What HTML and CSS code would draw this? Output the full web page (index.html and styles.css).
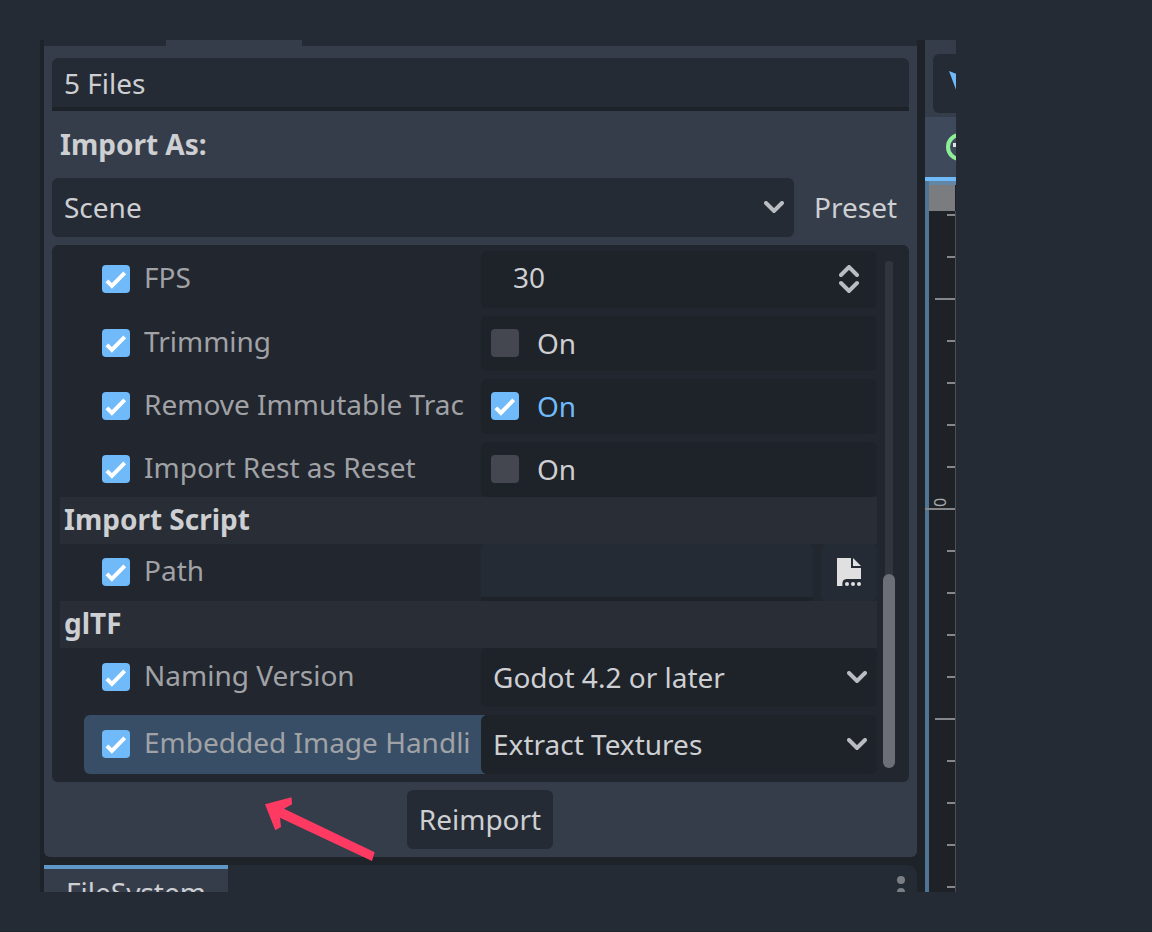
FILE: index.html
```html
<!DOCTYPE html>
<html lang="en">

<head>
    <meta charset="utf-8">
    <title>Import dock</title>
    <link rel="stylesheet" href="styles.css">
</head>

<body>
    <!-- shared icons -->
    <svg class="sprite">
        <symbol id="check" viewBox="0 0 28 28">
            <path d="M4.9 15.8l5 5.1L22.7 7.8" fill="none" stroke="#fff" stroke-width="4" />
        </symbol>
        <symbol id="chevron" viewBox="0 0 20 12">
            <path d="M2 2l8 8 8-8" fill="none" stroke="#b9bcc1" stroke-width="4" stroke-linecap="round" />
        </symbol>
    </svg>

    <div class="editor">
        <div class="dock">
            <div class="top-tabs"><div class="top-tab"></div></div>

            <div class="panel">
                <div class="line-edit files">5 Files</div>
                <div class="heading">Import As:</div>
                <div class="import-as">
                    <div class="select">Scene <svg class="chevron"><use href="#chevron" /></svg></div>
                    <div class="preset">Preset</div>
                </div>

                <div class="options">
                    <div class="rows">
                        <div class="row first">
                            <div class="label"><span class="box on"><svg><use href="#check" /></svg></span><span class="name">FPS</span></div>
                            <div class="value spin">
                                <span class="number">30</span>
                                <svg class="updown" viewBox="0 0 20 28">
                                    <path d="M2 10l8-8 8 8M2 18l8 8 8-8" fill="none" stroke="#b9bcc1" stroke-width="4" stroke-linecap="round" />
                                </svg>
                            </div>
                        </div>
                        <div class="row toggle">
                            <div class="label"><span class="box on"><svg><use href="#check" /></svg></span><span class="name">Trimming</span></div>
                            <div class="value"><span class="box"></span><span class="state">On</span></div>
                        </div>
                        <div class="row toggle">
                            <div class="label"><span class="box on"><svg><use href="#check" /></svg></span><span class="name">Remove Immutable Trac</span></div>
                            <div class="value"><span class="box on"><svg><use href="#check" /></svg></span><span class="state active">On</span></div>
                        </div>
                        <div class="row toggle">
                            <div class="label"><span class="box on"><svg><use href="#check" /></svg></span><span class="name">Import Rest as Reset</span></div>
                            <div class="value"><span class="box"></span><span class="state">On</span></div>
                        </div>

                        <div class="section">Import Script</div>
                        <div class="row path">
                            <div class="label"><span class="box on"><svg><use href="#check" /></svg></span><span class="name">Path</span></div>
                            <div class="path-value">
                                <div class="line-edit"></div>
                                <div class="browse">
                                    <svg width="24" height="28" viewBox="0 0 24 28" fill="#e0e0e0">
                                        <path d="M0 0H14V10H24V21H9.5A4.5 4.5 0 0 0 5.4 25.5V28H0Z" />
                                        <path d="M16 0l8 8h-8z" />
                                        <circle cx="10" cy="26" r="2" />
                                        <circle cx="16" cy="26" r="2" />
                                        <circle cx="22" cy="26" r="2" />
                                    </svg>
                                </div>
                            </div>
                        </div>

                        <div class="section">glTF</div>
                        <div class="row option">
                            <div class="label"><span class="box on"><svg><use href="#check" /></svg></span><span class="name">Naming Version</span></div>
                            <div class="value">Godot 4.2 or later <svg class="chevron"><use href="#chevron" /></svg></div>
                        </div>
                        <div class="row option selected">
                            <div class="label"><span class="box on"><svg><use href="#check" /></svg></span><span class="name">Embedded Image Handli</span></div>
                            <div class="value">Extract Textures <svg class="chevron"><use href="#chevron" /></svg></div>
                        </div>
                    </div>
                    <div class="scrollbar"><div class="thumb"></div></div>
                </div>

                <div class="reimport">Reimport</div>
            </div>

            <div class="bottom-tabs">
                <div class="bottom-tab">FileSystem</div>
                <svg class="dots" width="8" height="20" viewBox="0 0 8 20" fill="#7b7e85">
                    <circle cx="4" cy="4" r="4" />
                    <circle cx="4" cy="16" r="4" />
                </svg>
            </div>
        </div>

        <div class="viewport">
            <div class="toolbar">
                <div class="tool">
                    <svg width="23" height="59" viewBox="0 0 23 59"><path d="M16 17l24 9-10 4-5 11z" fill="#70bafa" /></svg>
                </div>
            </div>
            <div class="scene-tab">
                <svg width="31" height="60" viewBox="0 0 31 60">
                    <circle cx="35" cy="30" r="12" fill="none" stroke="#8eef97" stroke-width="4" />
                    <path d="M28 26h8v4h-8z" fill="#e0e0e0" />
                </svg>
            </div>
            <div class="canvas">
                <!-- vertical ruler -->
                <svg width="31" height="711" viewBox="0 0 31 711">
                    <path d="M4 4h26v26H4z" fill="#7b7c80" />
                    <path d="M30.5 30v681" stroke="#4c4e54" />
                    <path d="M22 34h8M22 76h8M10 118h20M22 160h8M22 202h8M22 244h8M22 286h8M0 328h30M22 370h8M22 412h8M22 454h8M22 496h8M10 538h20M22 580h8M22 622h8M22 664h8M22 706h8" stroke="#85878a" stroke-width="2" />
                    <text class="ruler-text" transform="translate(21 326) rotate(-90)">0</text>
                </svg>
            </div>
        </div>
    </div>

    <svg class="arrow" width="110" height="64" viewBox="265 797 110 64">
        <path d="M265 804.3L291.5 797.2L292 804.3L284 808.7L374.7 852.3L372 861L280 817.7L281 827L275.3 830.3Z" fill="#ff3a62" />
    </svg>
</body>

</html>
```
FILE: styles.css
```css
* {
    box-sizing: border-box;
}

body {
    margin: 0;
    height: 932px;
    padding: 40px;
    background: #252b34;
    border-bottom: 1px solid #20242c;
    color: #cdcfd2;
    font: 28px/38px "Noto Sans", sans-serif;
    white-space: nowrap;
    overflow: hidden;
}

.sprite {
    display: none;
}

.editor {
    display: flex;
    gap: 8px;
    width: 916px;
    height: 852px;
    padding-left: 4px;
    background: #1e2329;
    overflow: hidden;
}

/* left dock */

.dock {
    width: 873px;
    flex: none;
}

.top-tabs {
    height: 6px;
    padding-left: 122px;
    background: #252b34;
}

.top-tab {
    width: 136px;
    height: 6px;
    background: #363d4a;
}

.panel {
    display: flex;
    flex-direction: column;
    height: 811px;
    padding: 12px 8px 8px;
    background: #363d4a;
    border-radius: 0 0 6px 6px;
}

.line-edit {
    background: #252b34;
    border-bottom: 4px solid #1e2329;
    border-radius: 6px 6px 0 0;
}

.files {
    height: 53px;
    padding: 6px 12px;
}

.heading {
    height: 67px;
    padding: 14px 8px;
    font-weight: bold;
}

.import-as {
    display: flex;
    height: 59px;
}

.select {
    display: flex;
    align-items: center;
    justify-content: space-between;
    width: 742px;
    padding: 0 10px 1px 12px;
    background: #252b34;
    border-radius: 6px;
}

.chevron {
    width: 20px;
    height: 12px;
}

.preset {
    padding: 10px 0 0 20px;
}

.options {
    display: flex;
    gap: 6px;
    height: 537px;
    margin-top: 8px;
    padding: 6px 14px 8px 8px;
    background: #22262f;
    border-radius: 6px;
}

.rows {
    width: 817px;
}

.row {
    display: flex;
    height: 55px;
    margin-top: 8px;
    padding-left: 24px;
}

.row.first {
    height: 57px;
    margin-top: 0;
}

.row.path {
    height: 57px;
    margin-top: 0;
}

.row.option {
    height: 59px;
}

.section + .row.option {
    margin-top: 0;
}

.label {
    display: flex;
    align-items: center;
    width: 397px;
    padding: 0 0 1px 18px;
    color: #a0a2a6;
}

.name {
    margin-left: 14px;
    padding-bottom: 4px;
}

.box {
    width: 28px;
    height: 28px;
    flex: none;
    background: #44474f;
    border-radius: 4px;
}

.box.on {
    background: #70bafa;
}

.box svg {
    display: block;
    width: 28px;
    height: 28px;
}

.value {
    display: flex;
    align-items: center;
    justify-content: space-between;
    width: 396px;
    padding: 0 10px 1px 12px;
    background: #1e2229;
    border-radius: 6px;
}

.toggle .value {
    justify-content: flex-start;
    padding-left: 10px;
}

.state {
    margin-left: 18px;
}

.state.active {
    color: #70bafa;
}

.spin {
    padding: 0 18px 1px 32px;
}

.number {
    padding-bottom: 4px;
}

.updown {
    width: 20px;
    height: 28px;
}

.section {
    height: 47px;
    padding: 3px 4px;
    background: #292d36;
    font-weight: bold;
}

.path-value {
    display: flex;
    gap: 8px;
    width: 396px;
}

.path-value .line-edit {
    flex: 1;
}

.browse {
    display: flex;
    align-items: center;
    justify-content: center;
    width: 56px;
    padding-bottom: 1px;
    background: #252b34;
    border-radius: 6px;
}

/* the highlight runs on under the rounded corners of the value */
.selected .label {
    margin-right: -4px;
    width: 401px;
    background: #374e66;
    border-radius: 6px 0 0 6px;
}

.scrollbar {
    width: 12px;
    height: 507px;
    margin-top: 10px;
    padding-top: 313px;
    background: linear-gradient(#31353d, #31353d) center / 8px 100% no-repeat;
    border-radius: 6px;
}

.thumb {
    height: 194px;
    background: #6c6f75;
    border-radius: 6px;
}

.reimport {
    align-self: center;
    width: 146px;
    height: 59px;
    margin: 8px 1px 0 0;
    padding-top: 10px;
    background: #252b34;
    border-radius: 6px;
    text-align: center;
}

.bottom-tabs {
    display: flex;
    justify-content: space-between;
    height: 60px;
    margin-top: 8px;
    padding-right: 12px;
    background: #252b34;
    border-radius: 0 10px 0 0;
}

.bottom-tab {
    width: 184px;
    padding: 4px 22px;
    background: #363d4a;
    border-top: 4px solid #6097c7;
}

.dots {
    margin-top: 11px;
}

/* viewport, cut off at the right */

.viewport {
    width: 31px;
    flex: none;
    overflow: hidden;
}

.toolbar {
    height: 77px;
    padding: 14px 0 0 8px;
    background: #363d4a;
}

.tool {
    width: 60px;
    height: 59px;
    background: #252b34;
    border-radius: 6px;
}

.scene-tab {
    height: 64px;
    background: #3e4a5b;
    border-bottom: 4px solid #70bafa;
}

.canvas {
    height: 711px;
    background: linear-gradient(90deg, #4f7495 4px, transparent 4px), linear-gradient(#6286a5 4px, #1e2227 4px);
}

.ruler-text {
    font: 16px "Noto Sans", sans-serif;
    fill: #a9abae;
}

.arrow {
    position: absolute;
    left: 265px;
    top: 797px;
}
```
